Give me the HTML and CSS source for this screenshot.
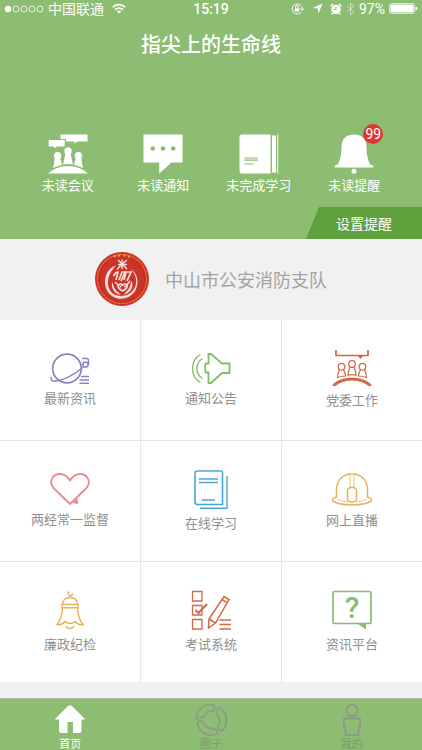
FILE: index.html
```html
<!DOCTYPE html>
<html lang="zh-CN">
<head>
    <meta charset="UTF-8">
    <meta name="viewport" content="width=device-width, initial-scale=1">
    <title>指尖上的生命线</title>
    <link rel="stylesheet" href="styles.css">
</head>
<body>
<div class="app">
    <header class="header">
        <div class="status">
            <div class="status-side">
                <svg width="40" height="10" viewBox="0 0 40 10" fill="none" stroke="#fff" stroke-width="0.8">
                    <circle cx="4" cy="5" r="3" fill="#fff"/>
                    <circle cx="12" cy="5" r="3"/>
                    <circle cx="20" cy="5" r="3"/>
                    <circle cx="28" cy="5" r="3"/>
                    <circle cx="36" cy="5" r="3"/>
                </svg>
                <span class="carrier">中国联通</span>
                <svg class="wifi" width="14" height="11" viewBox="0 0 14 11" fill="none" stroke="#fff" stroke-width="1.8">
                    <path d="M.8 4.2a9 9 0 0 1 12.4 0M3 6.7a6 6 0 0 1 8 0"/>
                    <path d="M7 10.6 4.8 8.5a3.2 3.2 0 0 1 4.4 0z" fill="#fff" stroke="none"/>
                </svg>
            </div>
            <span class="time">15:19</span>
            <div class="status-side status-right">
                <svg width="13" height="12" viewBox="0 0 13 12" fill="none" stroke="#fff">
                    <path d="M10.4 3.2A5 5 0 1 0 10 9.3M11 3.5V7M9.3 5.5 11 7.4l1.7-1.9"/>
                    <path d="M4.6 5.5V4.2a1.4 1.4 0 0 1 2.8 0v1.3"/>
                    <path d="M3.7 5.4h4.6v3.2H3.7z" fill="#fff" stroke="none"/>
                </svg>
                <svg class="locate" width="11" height="11" viewBox="0 0 11 11" fill="#fff">
                    <path d="M10.6.6 6.4 10.6 5.8 5.4.6 4.9z"/>
                </svg>
                <svg width="12" height="12" viewBox="0 0 12 12" fill="#fff">
                    <circle cx="6" cy="6.5" r="4.7"/>
                    <path d="M.6 3.2 3.2.7M11.4 3.2 8.8.7M2.7 10l-1 1.4M9.3 10l1 1.4" stroke="#fff" stroke-width="1.4"/>
                    <path d="M6 3.6v3H3.8" fill="none" stroke="#8cbd72"/>
                </svg>
                <svg width="9" height="14" viewBox="0 0 9 14" fill="none" stroke="#c5deb8">
                    <path d="M1 4l7 6-3.5 3V1L8 4l-7 6"/>
                </svg>
                <span class="percent">97%</span>
                <svg width="29" height="11" viewBox="0 0 29 11" fill="#fff">
                    <rect x=".5" y=".5" width="25" height="10" rx="2" fill="none" stroke="#fff" stroke-width=".7"/>
                    <rect x="1.5" y="1.5" width="23" height="8" rx="1"/>
                    <path d="M26.5 3.5q2 .4 2 2t-2 2z"/>
                </svg>
            </div>
        </div>
        <h1 class="title">指尖上的生命线</h1>
        <nav class="stats">
            <a class="stat" href="#meeting">
                <svg width="40" height="40" viewBox="0 0 40 40" fill="#fff">
                    <path d="M12.5.5h27v7H29l-2 2-1-2h-8V5h-5.500z"/>
                    <path d="M.7 6h16v6.500H9L7 14.400 5.800 12.500H.7z"/>
                    <circle cx="20" cy="17" r="3.700"/>
                    <path d="M17.500 19h5l2.500 11.500q-5-1-10 0z"/>
                    <circle cx="9.600" cy="21.700" r="3.700"/>
                    <path d="M7 24h5.200l1.800 7q-4.500 1-9 3z"/>
                    <circle cx="30.400" cy="21.700" r="3.700"/>
                    <path d="M27.800 24H33l2 10q-4-2-9-3z"/>
                    <path d="M0 39.500Q8 32 20 32t20 7.500z"/>
                </svg>
                <span>未读会议</span>
            </a>
            <a class="stat" href="#notice">
                <svg width="40" height="40" viewBox="0 0 40 40">
                    <path d="M.5.5h39v28H28.500L16.200 39.500v-11H.5z" fill="#fff"/>
                    <g fill="#8cbd72"><circle cx="9.800" cy="14.500" r="2.300"/><circle cx="20" cy="14.500" r="2.300"/><circle cx="30.200" cy="14.500" r="2.300"/></g>
                </svg>
                <span>未读通知</span>
            </a>
            <a class="stat" href="#study">
                <svg width="40" height="40" viewBox="0 0 40 40" fill="#fff">
                    <path d="M3 .5h28.500v39H3q-2.500 0-2.500-2.500V3Q.5.500 3 .500zM33 1.500h4v37h-4zM38.200.500h1v39h-1z"/>
                    <path d="M5.500 24H19M5.500 26.200H19M5.500 30h9" stroke="#8cbd72" stroke-width="1.200"/>
                </svg>
                <span>未完成学习</span>
            </a>
            <a class="stat" href="#remind">
                <svg width="40" height="40" viewBox="0 0 40 40" fill="#fff">
                    <path d="M7.500 13C7.500 4 13 .5 20 .5S32.500 4 32.500 13c0 9 2 15 4 17.500l2.500 1q1 .8 0 2H1q-1-1.200 0-2l2.500-1C5.500 28 7.500 22 7.500 13z"/>
                    <circle cx="20" cy="37.300" r="2.500"/>
                </svg>
                <span class="badge">99</span>
                <span>未读提醒</span>
            </a>
        </nav>
        <button class="setting" type="button">设置提醒</button>
    </header>

    <section class="unit">
        <svg width="54" height="54" viewBox="0 0 54 54" fill="none">
            <circle cx="27" cy="27" r="27" fill="#cd3429"/>
            <circle cx="27" cy="27" r="24.500" stroke="#e8843a" stroke-width="1.200" stroke-dasharray="1.500 1"/>
            <circle cx="27" cy="27" r="22.500" stroke="#b92c22" stroke-width=".8"/>
            <path d="M19 4.600l2-.6M23 3.800l2-.3M28.500 3.500l2 .2M33 4.200l2 .7" stroke="#f0a04a" stroke-width="2"/>
            <path d="M21 13.500C6 18 6 43 23 46.500c18 3 27-20 12-30.500 11 11 6 25-5 27.500C12 47 7 27 21 13.500z" fill="#f1dfdd"/>
            <path d="M23 8l9 9M32 8l-6 5-4 4.500M27 7.500V17M23 12.500h9" stroke="#f7e3df" stroke-width="1.300"/>
            <path d="M17 30c-1 7 3 12 9 13-3-3-7-5-8-11M36.500 29c3 7-2 12-8 14 3-4 6-5 7-11" fill="#f5e1dd"/>
            <path d="M18.500 24q2-4 4.500-4l-2 8M24 28l3-8h3l-4 9M29 28l2-8h5l-4 9" stroke="#f5dfda" stroke-width="1.700"/>
            <path d="M27.500 39c-6-3-5-7-2-7q2 0 2 2 0-2 2-2c4 0 4 4-2 7zM20 30l4 4M35 29l-4 5" stroke="#f5dfda" stroke-width="1.500"/>
            <circle cx="25.500" cy="34.500" r="1" fill="#f5dfda"/><circle cx="30" cy="34.500" r="1" fill="#f5dfda"/>
        </svg>
        <h2 class="unit-name">中山市公安消防支队</h2>
    </section>

    <main class="grid">
        <a class="cell" href="#news">
            <svg width="40" height="31" viewBox="0 0 40 31" fill="none" stroke="#8b82bd" stroke-width="1.700">
                <circle cx="17" cy="15.500" r="14.300"/>
                <path d="M1.300 24Q0 29 6 28C15 27 25 21 33.500 14" stroke-width="1.500"/>
                <circle cx="35.500" cy="11.500" r="2.600" stroke-width="1.500"/>
                <path d="M32 5.500h4.500q2 0 2 2V12M31 23.500h8M29.500 27h9.500M29.500 30.200h9.500" stroke-width="1.400"/>
            </svg>
            <span>最新资讯</span>
        </a>
        <a class="cell" href="#bulletin">
            <svg width="40" height="31" viewBox="0 0 40 31" fill="none" stroke="#84bd65" stroke-width="1.800">
                <path d="M17.500 1h2.500l11 9.500h7.500v9.500H31L20 30h-2.500V19.500h-2.800q-1.500-4.500 0-9h2.800z"/>
                <path d="M9.500 1.500C-1 7-1 24 9.500 29.500M11.500 5.500C4 10 4 21 11.500 25.500" stroke-width="1.400"/>
            </svg>
            <span>通知公告</span>
        </a>
        <a class="cell" href="#committee">
            <svg width="40" height="36" viewBox="0 0 40 36" fill="none" stroke="#d56443" stroke-width="1.200">
                <path d="M4 0v5.500h32V0" stroke-width="1.700"/>
                <path d="M26 6h5l-2.500 3z" fill="#d56443" stroke="none"/>
                <circle cx="20" cy="14" r="3.300"/>
                <path d="M18 16.700c-1 3-2 5-2 8.500q4-1 8 0c0-3.500-1-5.500-2-8.500"/>
                <circle cx="9.500" cy="16.700" r="3.300"/>
                <path d="M7.500 19.500c-1 3-2 4-2 8q4-1.500 8-1.500c0-3-1-4-2-6.500"/>
                <circle cx="30.500" cy="16.700" r="3.300"/>
                <path d="M28.500 19.500c-1 2.500-2 3.500-2 6.500q4 0 8 1.500c0-4-1-5-2-8"/>
                <path d="M.3 35.700C7 25.500 33 25.500 39.700 35.700h-3C28 28.500 12 28.500 3.300 35.700z" fill="#d56443" stroke="#d56443" stroke-width=".6"/>
            </svg>
            <span>党委工作</span>
        </a>
        <a class="cell" href="#supervise">
            <svg width="40" height="32" viewBox="0 0 40 32" fill="none" stroke="#e88d96" stroke-width="1.900">
                <path d="M20 31 4 15.500C-2 9 2.500 1 10 1q6 0 10 6.500Q24 1 30 1c7.500 0 12 8 6 14.500L20 31z"/>
                <path d="M27 24.500 28.500 31l-6.500-1z" fill="#e88d96" stroke="none"/>
            </svg>
            <span>两经常一监督</span>
        </a>
        <a class="cell" href="#online">
            <svg width="34" height="39" viewBox="0 0 34 39" fill="none" stroke="#4aa6d8" stroke-width="1.600">
                <path d="M3.500 1H27q1.500 0 1.500 1.500v32H3.500Q1 34.500 1 32V3.500Q1 1 3.500 1z"/>
                <path d="M5 9h19M5 12.500h19M7.500 30H21M33 6v32.200H6" stroke-width="1.400"/>
            </svg>
            <span>在线学习</span>
        </a>
        <a class="cell" href="#live">
            <svg width="40" height="33" viewBox="0 0 40 33" fill="none" stroke="#e8b255" stroke-width="1.500">
                <path d="M4.500 25V17C4.500 7 11 1 20 1s15.500 6 15.500 16v8"/>
                <path d="M4.500 24c-4 1-5 3-3 4.500C9 33 31 33 38.500 28.500c2-1.500 1-3.500-3-4.500"/>
                <path d="M5 26q4 2.500 10.500 3M35 26q-4 2.500-10.500 3M18 1.500V14M22 1.500V14" stroke-width=".8"/>
                <rect x="15.500" y="14.500" width="9" height="14.500" rx="3.500"/>
            </svg>
            <span>网上直播</span>
        </a>
        <a class="cell" href="#discipline">
            <svg width="28" height="40" viewBox="0 0 28 40" fill="none" stroke="#e8b255" stroke-width="1.400">
                <path d="M13 1.500q-2 3 .8 4.200Q16 6 17 3.500M14 6v2M6.500 14.500Q7 7.500 14 7.500t7.500 7M6 14.500h16v3.200H6z"/>
                <path d="M6.500 18C6 27 4 31 1 34.500q5 1 8-3 5 4 10 0 3 4 8 3C24 31 22 27 21.500 18M9.500 36q4.500 5 9 0"/>
            </svg>
            <span>廉政纪检</span>
        </a>
        <a class="cell" href="#exam">
            <svg width="40" height="40" viewBox="0 0 40 40" fill="none" stroke="#ce6a4b" stroke-width="1.300">
                <path d="M1.500 1.500H11V11H1.500zM1.500 15.500H11V25H1.500zM1.500 29.500H11V39H1.500z"/>
                <path d="M4.500 20 7.500 23 16 14" stroke-width="2"/>
                <path d="M18 29 33 6.500l5 3L24.500 33l-7 5zM31 9.500l5 3.200M18 29l6.500 4" stroke-width="1.500"/>
                <path d="M28.500 30H40M28.500 34.500H40M28.500 39H40"/>
            </svg>
            <span>考试系统</span>
        </a>
        <a class="cell" href="#platform">
            <svg width="40" height="40" viewBox="0 0 40 40" fill="none" stroke="#88bd6e" stroke-width="1.700">
                <rect x="1" y="1.500" width="38" height="32" rx="1.500"/>
                <path d="M26 34h8v5.500z" fill="#88bd6e" stroke="none"/>
                <text class="mark" x="20" y="28" text-anchor="middle">?</text>
            </svg>
            <span>资讯平台</span>
        </a>
    </main>

    <nav class="tabbar">
        <a class="tab active" href="#home">
            <svg width="32" height="32" viewBox="0 0 32 32" fill="#fff">
                <path d="M13.500 2.500q2.500-2.500 5 0L31.500 15.500H27.500V27q0 2-2 2H19V18h-5.500v11H7q-2 0-2-2V15.500H.5z"/>
            </svg>
            <span>首页</span>
        </a>
        <a class="tab" href="#circle">
            <svg width="32" height="32" viewBox="0 0 32 32" fill="none" stroke="#8d9c86" stroke-width="1.800" stroke-linejoin="round">
                <path d="M1 15C1.500 6 8 0 16.500.800q4 .7 3 4-1 2.500-4 2.300-5 .5-7 6l-4 .7z"/>
                <path d="M23.500 3c8 4 10 14 5.500 22q-3 3-5.500.5-1.500-2 .5-4.500 2-5-1.500-9.500l-1-4z"/>
                <path d="M22.500 29.500C14 34 5 29 2.500 20.500q0-3 3-3.500 2.500 0 3.500 3 3 5 9 4.500l3 1z"/>
            </svg>
            <span>圈子</span>
        </a>
        <a class="tab" href="#mine">
            <svg width="32" height="32" viewBox="0 0 32 32" fill="none" stroke="#8d9c86" stroke-width="1.900" stroke-linejoin="round">
                <circle cx="16" cy="6.500" r="5.700"/>
                <path d="M8 14.500h16v8h-1.500V31h-13v-8.500H8z"/>
            </svg>
            <span>我的</span>
        </a>
    </nav>
</div>
</body>
</html>
```
FILE: styles.css
```css
* {
    box-sizing: border-box;
}

body {
    margin: 0;
    background: #efeff4;
    font-family: "Liberation Sans", "Noto Sans CJK SC", sans-serif;
    font-size: 13px;
}

a {
    color: inherit;
    text-decoration: none;
}

svg {
    display: block;
    flex: none;
}

.app {
    min-height: 100vh;
    display: flex;
    flex-direction: column;
}

/* header */
.header {
    display: flex;
    flex-direction: column;
    flex: none;
    background: #8cbd72;
    color: #fff;
}

.status {
    display: flex;
    align-items: center;
    height: 17px;
    padding: 0 4px;
}

.status-side {
    flex: 1;
    display: flex;
    align-items: center;
    gap: 4px;
}

.status-right {
    justify-content: flex-end;
}

.carrier {
    font-size: 14px;
    line-height: 16px;
}

.wifi {
    margin-left: 4px;
}

.locate {
    margin: 0 3px 0 4px;
}

.time {
    font-family: Roboto, sans-serif;
    font-size: 14px;
    font-weight: 500;
}

.percent {
    font-family: Roboto, sans-serif;
    font-size: 14px;
}

.title {
    margin: 14px 0 0;
    font-size: 20px;
    font-weight: 500;
    line-height: 28px;
    text-align: center;
}

.stats {
    display: grid;
    grid-template-columns: repeat(4, 1fr);
    margin-top: 75px;
    padding: 0 20px;
}

.stat {
    position: relative;
    display: flex;
    flex-direction: column;
    align-items: center;
    gap: 3px;
    line-height: 18px;
}

.badge {
    position: absolute;
    top: -10px;
    left: 50%;
    width: 20px;
    height: 20px;
    margin-left: 9px;
    border-radius: 50%;
    background: #dc3731;
    font-family: Roboto, sans-serif;
    font-size: 14px;
    line-height: 20px;
    text-align: center;
}

.setting {
    align-self: flex-end;
    width: 116px;
    height: 32px;
    margin-top: 12px;
    padding: 0;
    border: 0;
    background: #5fa13c;
    clip-path: polygon(13px 0, 100% 0, 100% 100%, 0 100%);
    color: #fff;
    font-family: inherit;
    font-size: 14px;
    cursor: pointer;
}

/* unit */
.unit {
    display: flex;
    flex: none;
    align-items: center;
    justify-content: center;
    gap: 16px;
    height: 80px;
    background: #f1f1f1;
}

.unit-name {
    margin: 0;
    color: #a3a3a3;
    font-size: 18px;
    font-weight: 400;
}

/* menu */
.grid {
    display: grid;
    flex: none;
    grid-template-columns: repeat(3, 1fr);
    grid-auto-rows: 120px;
    gap: 1px;
    border-top: 1px solid #f1f1f1;
    background: #e6e6e8;
}

.cell {
    display: flex;
    flex-direction: column;
    align-items: center;
    justify-content: center;
    gap: 6px;
    background: #fff;
    color: #8f8f8f;
    line-height: 18px;
}

.mark {
    fill: #88bd6e;
    stroke: none;
    font-family: Roboto, sans-serif;
    font-size: 30px;
    font-weight: 500;
}

/* bottom tabs */
.tabbar {
    display: grid;
    grid-template-columns: repeat(3, 1fr);
    flex: none;
    margin-top: auto;
    padding-top: 5px;
    border-top: 1px solid #b0b9aa;
    background: #8cbd72;
}

.tab {
    display: flex;
    flex-direction: column;
    align-items: center;
    gap: 2px;
    color: #7f9a74;
    font-size: 11px;
    line-height: 12px;
}

.tab.active {
    color: #fff;
}
```
